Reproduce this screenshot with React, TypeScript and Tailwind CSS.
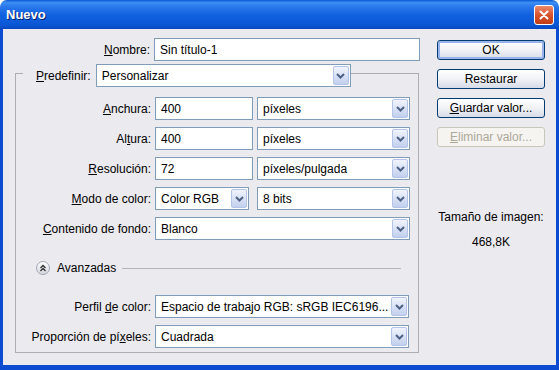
import React from "react";

// little XP style combo arrow
const Arrow: React.FC = () => (
  <span className="flex h-[19px] w-[16px] shrink-0 items-center justify-center rounded-[2px] border border-[#b4c4e8] bg-gradient-to-b from-[#f1f4fc] to-[#c2d0ee]">
    <svg width="9" height="6" viewBox="0 0 9 6">
      <path d="M1 1l3.5 3.5L8 1" fill="none" stroke="#4d6185" strokeWidth="2" />
    </svg>
  </span>
);

const Field: React.FC<{ value: string; w: string; select?: boolean }> = ({ value, w, select }) => (
  <div className={`flex h-[23px] shrink-0 items-center border border-[#7f9db9] bg-white pr-[1px] pl-[5px] ${w}`}>
    <span className="flex-1 truncate whitespace-nowrap">{value}</span>
    {select && <Arrow />}
  </div>
);

const Row: React.FC<{ label: React.ReactNode; children: React.ReactNode }> = ({ label, children }) => (
  <div className="flex h-[23px] items-center">
    <div className="w-[135px] text-right whitespace-nowrap">{label}</div>
    <div className="ml-[4px] flex items-center">{children}</div>
  </div>
);

const Btn: React.FC<{ children: React.ReactNode; kind?: "ok" | "off" }> = ({ children, kind }) => {
  if (kind === "off")
    return (
      <div className="flex h-[20px] w-[108px] items-center justify-center rounded-[3px] border border-[#c9c7ba] bg-[#f5f4f1] text-[#aca899]">
        {children}
      </div>
    );
  return (
    <div
      className={
        kind === "ok"
          ? "flex h-[20px] w-[108px] items-center justify-center rounded-[3px] border border-[#003c74] bg-gradient-to-b from-white via-[#f1f2f6] to-[#d6dbe8] shadow-[inset_0_0_0_2px_#98b4ea]"
          : "flex h-[20px] w-[108px] items-center justify-center rounded-[3px] border border-[#003c74] bg-gradient-to-b from-white via-[#f1f2f6] to-[#d6dbe8]"
      }
    >
      {children}
    </div>
  );
};

export default function App() {
  return (
    <div className="h-[370px] w-[559px] bg-white font-['Liberation_Sans',Arial,sans-serif] text-[12px] leading-[14px] text-black">
      <div className="flex h-full flex-col overflow-hidden rounded-t-[7px]">
        {/* title bar */}
        <div className="flex h-[29px] shrink-0 items-center justify-between bg-[linear-gradient(to_bottom,#0a58d6_0%,#3d8ef4_9%,#2b79ec_22%,#1262e0_50%,#0a57d6_85%,#0949c0_100%)] pr-[5px] pl-[6px]">
          <span className="text-[13px] font-bold text-white [text-shadow:1px_1px_#0a1f6a]">Nuevo</span>
          <span className="flex h-[20px] w-[20px] items-center justify-center rounded-[3px] border border-white bg-gradient-to-b from-[#ea8a6c] via-[#d6532c] to-[#c13d14]">
            <svg width="10" height="10" viewBox="0 0 10 10">
              <path d="M1.5 1.5l7 7M8.5 1.5l-7 7" stroke="white" strokeWidth="2" strokeLinecap="round" />
            </svg>
          </span>
        </div>

        {/* body */}
        <div className="flex flex-1 border-x-[3px] border-b-[5px] border-[#0c4cd0] bg-[#ebeaef]">
          <div className="flex w-[417px] flex-col pt-[9px] pl-[12px]">
            <Row label={<><u>N</u>ombre:</>}>
              <Field value="Sin título-1" w="w-[266px]" />
            </Row>

            <fieldset className="mt-[3px] w-[404px] border border-[#adadb4] pb-[4px]">
              <legend className="ml-[7px] pl-[13px]">
                <div className="flex h-[19px] items-start">
                  <div className="flex h-[23px] items-center">
                    <u>P</u>redefinir:
                  </div>
                  <div className="ml-[5px]">
                    <Field value="Personalizar" w="w-[255px]" select />
                  </div>
                </div>
              </legend>

              <div className="mt-[14px] flex flex-col gap-[7px]">
                <Row label={<><u>A</u>nchura:</>}>
                  <Field value="400" w="w-[98px]" />
                  <div className="ml-[4px]">
                    <Field value="píxeles" w="w-[153px]" select />
                  </div>
                </Row>
                <Row label={<>Al<u>t</u>ura:</>}>
                  <Field value="400" w="w-[98px]" />
                  <div className="ml-[4px]">
                    <Field value="píxeles" w="w-[153px]" select />
                  </div>
                </Row>
                <Row label={<><u>R</u>esolución:</>}>
                  <Field value="72" w="w-[98px]" />
                  <div className="ml-[4px]">
                    <Field value="píxeles/pulgada" w="w-[153px]" select />
                  </div>
                </Row>
                <Row label={<><u>M</u>odo de color:</>}>
                  <Field value="Color RGB" w="w-[94px]" select />
                  <div className="ml-[8px]">
                    <Field value="8 bits" w="w-[153px]" select />
                  </div>
                </Row>
                <Row label={<><u>C</u>ontenido de fondo:</>}>
                  <Field value="Blanco" w="w-[255px]" select />
                </Row>
              </div>

              {/* Avanzadas */}
              <div className="mt-[21px] flex h-[14px] items-center pr-[17px] pl-[20px]">
                <svg width="14" height="14" viewBox="0 0 14 14">
                  <defs>
                    <linearGradient id="adv" x1="0" y1="0" x2="0" y2="1">
                      <stop offset="0" stopColor="#ffffff" />
                      <stop offset="1" stopColor="#d4d6de" />
                    </linearGradient>
                  </defs>
                  <circle cx="7" cy="7" r="6.5" fill="url(#adv)" stroke="#a3a6b4" />
                  <path d="M4.5 7l2.5-2.5L9.5 7M4.5 10l2.5-2.5L9.5 10" fill="none" stroke="#2d2d2d" strokeWidth="1.3" />
                </svg>
                <span className="ml-[7px]">Avanzadas</span>
                <div className="ml-[6px] h-px flex-1 bg-[#b3b3b8]" />
              </div>

              <div className="mt-[20px] flex flex-col gap-[7px]">
                <Row label={<>Perfil <u>d</u>e color:</>}>
                  <Field value="Espacio de trabajo RGB: sRGB IEC6196..." w="w-[254px]" select />
                </Row>
                <Row label={<>Proporción de pí<u>x</u>eles:</>}>
                  <Field value="Cuadrada" w="w-[254px]" select />
                </Row>
              </div>
            </fieldset>
          </div>

          {/* right column */}
          <div className="ml-[17px] flex w-[108px] flex-col pt-[11px]">
            <div className="flex flex-col gap-[9px]">
              <Btn kind="ok">OK</Btn>
              <Btn>Restaurar</Btn>
              <Btn>
                <span>
                  <u>G</u>uardar valor...
                </span>
              </Btn>
              <Btn kind="off">
                <span>
                  <u>E</u>liminar valor...
                </span>
              </Btn>
            </div>
            <div className="mt-[63px] text-center whitespace-nowrap">Tamaño de imagen:</div>
            <div className="mt-[11px] text-center">468,8K</div>
          </div>
        </div>
      </div>
    </div>
  );
}
